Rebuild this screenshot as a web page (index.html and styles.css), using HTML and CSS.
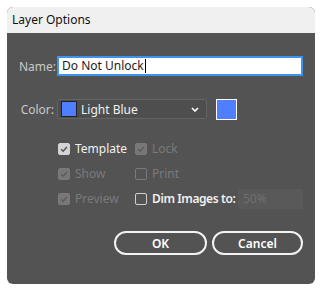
FILE: index.html
```html
<!DOCTYPE html>
<html lang="en">
<head>
    <meta charset="UTF-8">
    <title>Layer Options</title>
    <link rel="stylesheet" href="styles.css">
</head>
<body>

<div class="dialog">
    <div class="titlebar">Layer Options</div>

    <div class="content">
        <div class="field-row">
            <span class="field-label">Name:</span>
            <div class="name-input">Do Not Unlock<span class="caret"></span></div>
        </div>

        <div class="field-row color-row">
            <span class="field-label">Color:</span>
            <div class="select">
                <span class="select-swatch"></span>
                <span class="select-text">Light Blue</span>
                <svg class="chevron" width="8" height="5" viewBox="0 0 8 5">
                    <polyline points="1,1 4,4 7,1" fill="none" stroke="#ffffff" stroke-width="1.6"/>
                </svg>
            </div>
            <span class="swatch"></span>
        </div>

        <div class="options">
            <label class="check">
                <span class="box checked"><svg viewBox="0 0 12 12"><polyline points="2.5,6.2 5,8.6 9.5,3.6"/></svg></span>
                <span>Template</span>
            </label>
            <label class="check disabled">
                <span class="box checked"><svg viewBox="0 0 12 12"><polyline points="2.5,6.2 5,8.6 9.5,3.6"/></svg></span>
                <span>Lock</span>
            </label>
            <label class="check disabled">
                <span class="box checked"><svg viewBox="0 0 12 12"><polyline points="2.5,6.2 5,8.6 9.5,3.6"/></svg></span>
                <span>Show</span>
            </label>
            <label class="check disabled">
                <span class="box"></span>
                <span>Print</span>
            </label>
            <label class="check disabled">
                <span class="box checked"><svg viewBox="0 0 12 12"><polyline points="2.5,6.2 5,8.6 9.5,3.6"/></svg></span>
                <span>Preview</span>
            </label>
            <div class="dim-row">
                <label class="check">
                    <span class="box"></span>
                    <span class="strong">Dim Images to:</span>
                </label>
                <div class="dim-input">50%</div>
            </div>
        </div>

        <div class="buttons">
            <button class="btn">OK</button>
            <button class="btn">Cancel</button>
        </div>
    </div>
</div>

</body>
</html>
```

FILE: styles.css
```css
/* Base */
body {
    margin: 0;
    background: #ffffff;
    font-family: 'Noto Sans', 'Liberation Sans', sans-serif;
    font-size: 12px;
}
.dialog {
    margin: 7px;
    width: 308px;
    height: 277px;
    background: #535353;
    border-radius: 6px;
    overflow: hidden;
    display: flex;
    flex-direction: column;
}
.titlebar {
    height: 26px;
    background: #f0f0f0;
    color: #111;
    font-size: 12px;
    line-height: 26px;
    padding-left: 5px;
}
.content {
    padding: 23px 12px 0 12px;
}

/* Name / Color rows */
.field-row {
    display: flex;
    align-items: center;
    height: 20px;
}
.color-row {
    margin-top: 23px;
}
.field-label {
    width: 35px;
    margin-right: 3px;
    text-align: right;
    color: #c9c9c9;
}
.name-input {
    flex: 1;
    height: 16px;
    line-height: 16px;
    background: #ffffff;
    border: 2px solid #3d93ee;
    padding-left: 3px;
    color: #1c1c1c;
    display: flex;
    align-items: center;
}
.caret {
    width: 1px;
    height: 14px;
    background: #000;
    margin-left: 1px;
}
.select {
    width: 145px;
    height: 18px;
    border: 1px solid #646464;
    border-radius: 2px;
    background: #4e4e4e;
    display: flex;
    align-items: center;
    padding-left: 3px;
}
.select-swatch {
    width: 16px;
    height: 16px;
    background: #4f7fff;
    border: 1px solid #222;
    box-sizing: border-box;
}
.select-text {
    flex: 1;
    margin-left: 4px;
    color: #f2f2f2;
}
.chevron {
    margin-right: 7px;
}
.swatch {
    width: 21px;
    height: 21px;
    margin-left: 9px;
    background: #4f7fff;
    border: 1px solid #ffffff;
    box-sizing: border-box;
}

/* Checkboxes */
.options {
    margin-top: 17px;
    margin-left: 39px;
    display: grid;
    grid-template-columns: 77px 1fr;
    grid-auto-rows: 25px;
    align-items: center;
}
.check {
    display: flex;
    align-items: center;
    color: #f0f0f0;
    white-space: nowrap;
}
.check.disabled {
    color: #7a7a7a;
}
.box {
    flex: none;
    width: 12px;
    height: 12px;
    border: 1px solid #cfcfcf;
    border-radius: 2px;
    box-sizing: border-box;
    margin-right: 5px;
}
.box.checked {
    background: #d4d4d4;
    border-color: #d4d4d4;
}
.box svg {
    display: block;
    width: 10px;
    height: 10px;
}
.box svg polyline {
    fill: none;
    stroke: #555;
    stroke-width: 1.8;
}
.disabled .box {
    border-color: #7a7a7a;
}
.disabled .box.checked {
    background: #777777;
}
.disabled .box svg polyline {
    stroke: #5c5c5c;
}
.strong {
    font-weight: 600;
    letter-spacing: -0.4px;
}
.dim-row {
    display: grid;
    grid-template-columns: 1fr 65px;
    align-items: center;
}
.dim-input {
    height: 20px;
    line-height: 20px;
    padding-left: 5px;
    background: #595959;
    color: #6f6f6f;
}

/* Buttons */
.buttons {
    margin-top: 20px;
    display: flex;
    justify-content: flex-end;
    gap: 5px;
}
.btn {
    width: 93px;
    height: 24px;
    border: 2px solid #f2f2f2;
    border-radius: 12px;
    background: transparent;
    color: #ffffff;
    font-family: 'Noto Sans', 'Liberation Sans', sans-serif;
    font-size: 12px;
    font-weight: 600;
    padding: 0;
}
.btn + .btn {
    width: 91px;
}
```
